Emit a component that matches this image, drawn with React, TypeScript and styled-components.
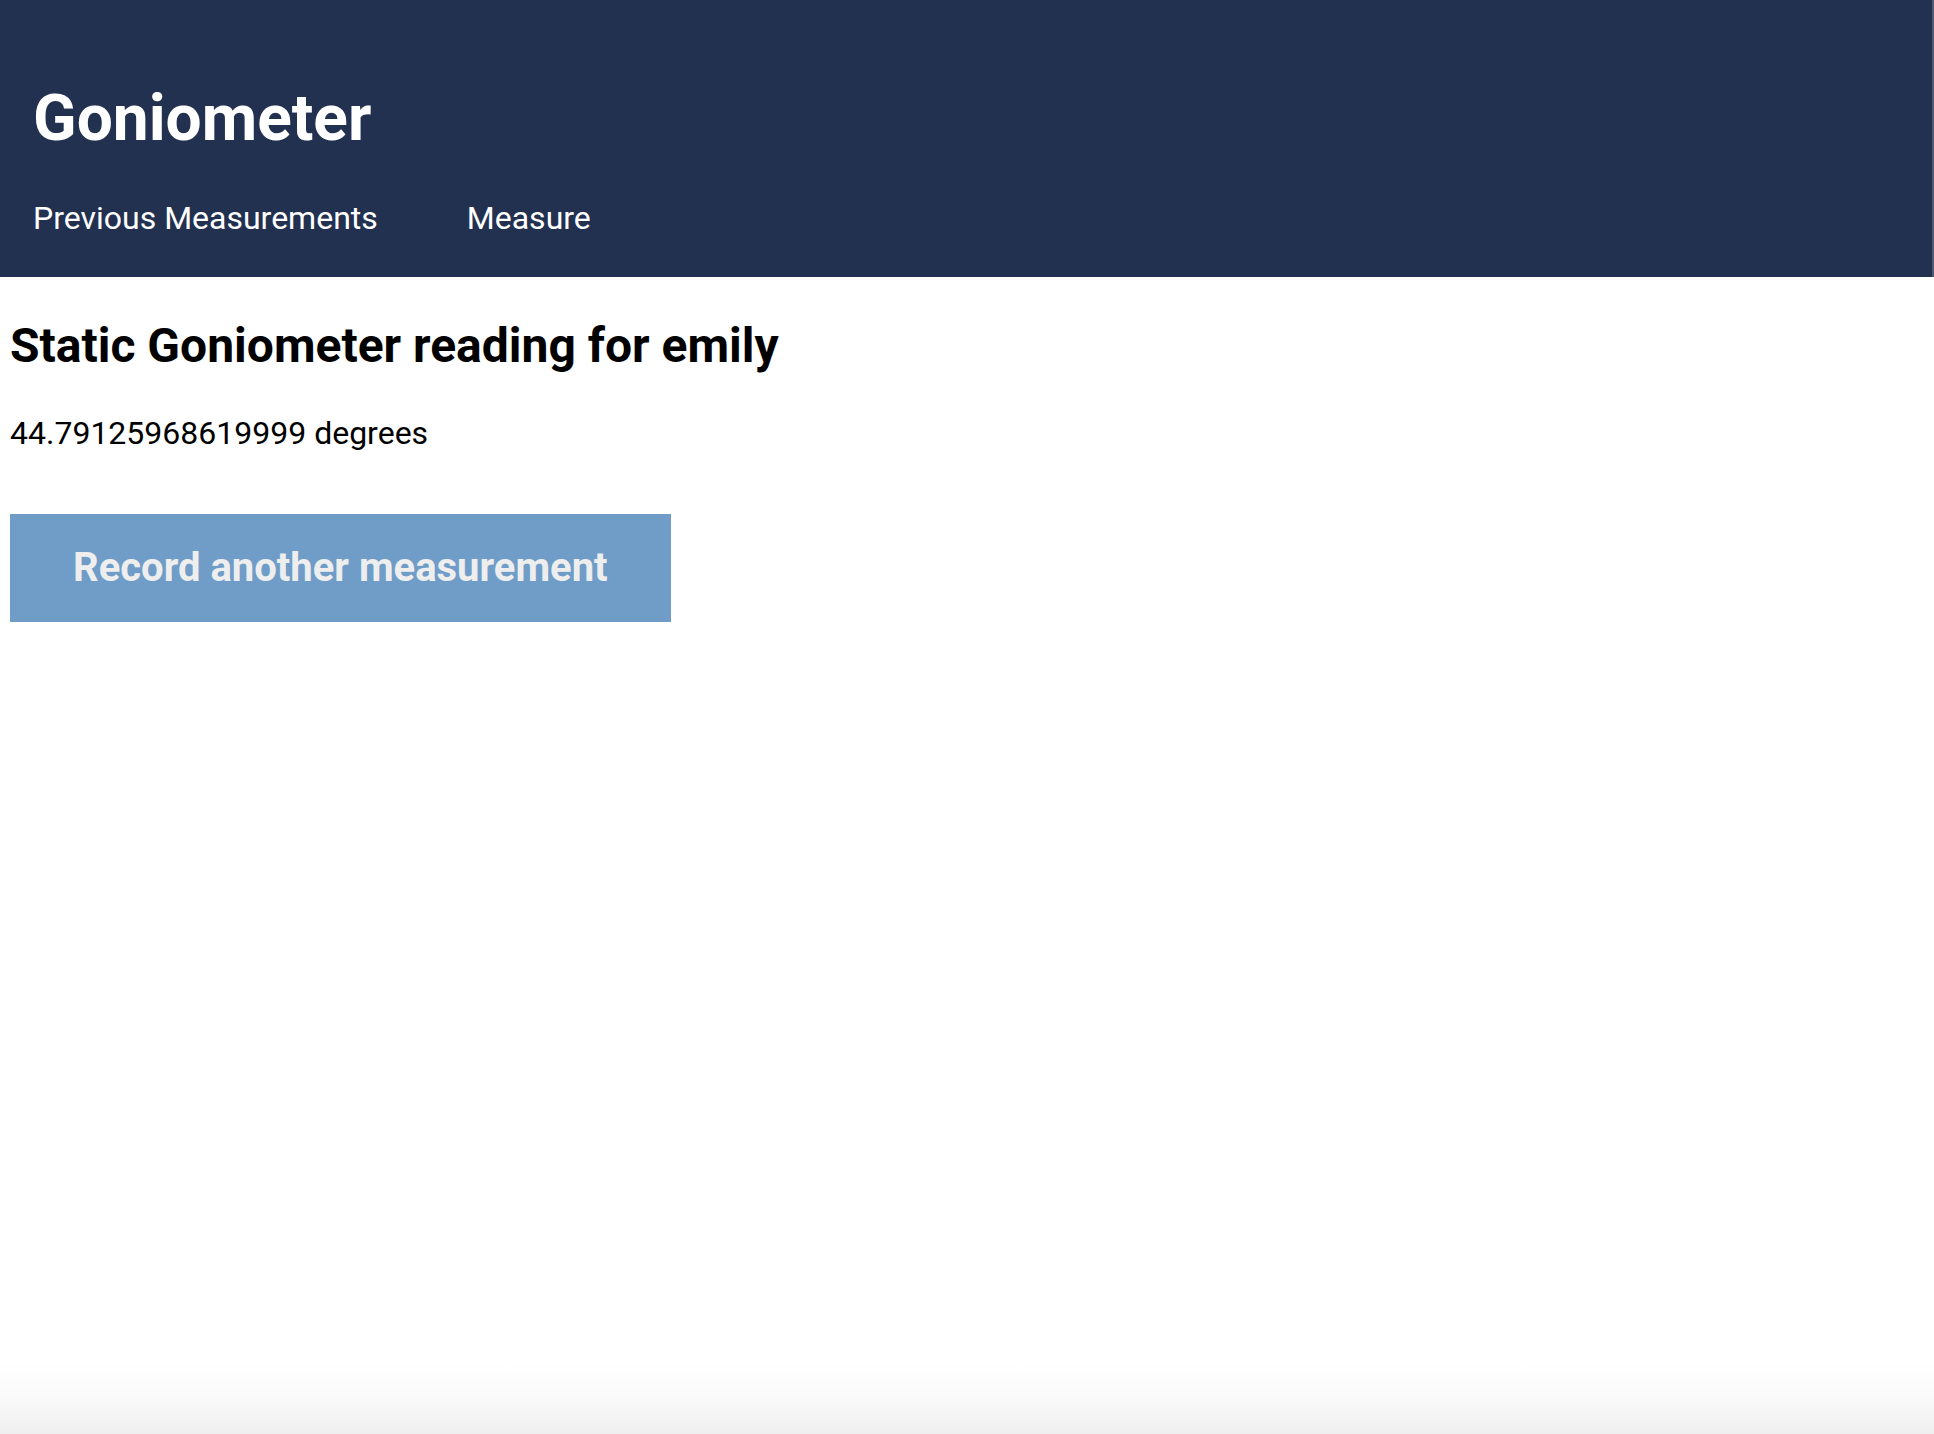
import React from "react";
import styled, { createGlobalStyle } from "styled-components";

const GlobalStyle = createGlobalStyle`
  html, body {
    margin: 0;
    padding: 0;
    background: #ffffff;
  }
  body {
    font-family: Roboto, "Liberation Sans", Arial, sans-serif;
    color: #000000;
  }
`;

const Page = styled.div`
  min-height: 100vh;
  background: linear-gradient(
    to bottom,
    #ffffff calc(100% - 72px),
    #fbfbfb calc(100% - 40px),
    #efefef 100%
  );
`;

const Header = styled.header`
  background-color: #233150;
  padding: 38px 0 40px 33px;
  border-right: 2px solid #4f5a72;
`;

const Title = styled.h1`
  margin: 43px 0 43px;
  font-size: 64px;
  font-weight: 700;
  line-height: normal;
  color: #ffffff;
`;

const Nav = styled.nav`
  display: flex;
  gap: 89px;
`;

const NavLink = styled.a`
  font-size: 32px;
  line-height: normal;
  color: #ffffff;
  text-decoration: none;
  cursor: pointer;
`;

const Main = styled.main`
  padding: 0 10px;
`;

const Heading = styled.h2`
  margin: 40px 0 40px;
  font-size: 48px;
  font-weight: 700;
  line-height: normal;
`;

const Reading = styled.p`
  margin: 0;
  font-size: 32px;
  line-height: normal;
`;

const RecordButton = styled.button`
  display: block;
  margin-top: 62px;
  padding: 30px 63px 31px;
  border: none;
  border-radius: 0;
  background-color: #6f9dc8;
  color: #eeeeee;
  font-family: Roboto, "Liberation Sans", Arial, sans-serif;
  font-size: 40px;
  font-weight: 700;
  line-height: normal;
  cursor: pointer;
`;

function App() {
  const user = "emily";
  const degrees = 44.79125968619999;

  return (
    <Page>
      <GlobalStyle />
      <Header>
        <Title>Goniometer</Title>
        <Nav>
          <NavLink>Previous Measurements</NavLink>
          <NavLink>Measure</NavLink>
        </Nav>
      </Header>
      <Main>
        <Heading>Static Goniometer reading for {user}</Heading>
        <Reading>{degrees} degrees</Reading>
        <RecordButton>Record another measurement</RecordButton>
      </Main>
    </Page>
  );
}

export default App;
